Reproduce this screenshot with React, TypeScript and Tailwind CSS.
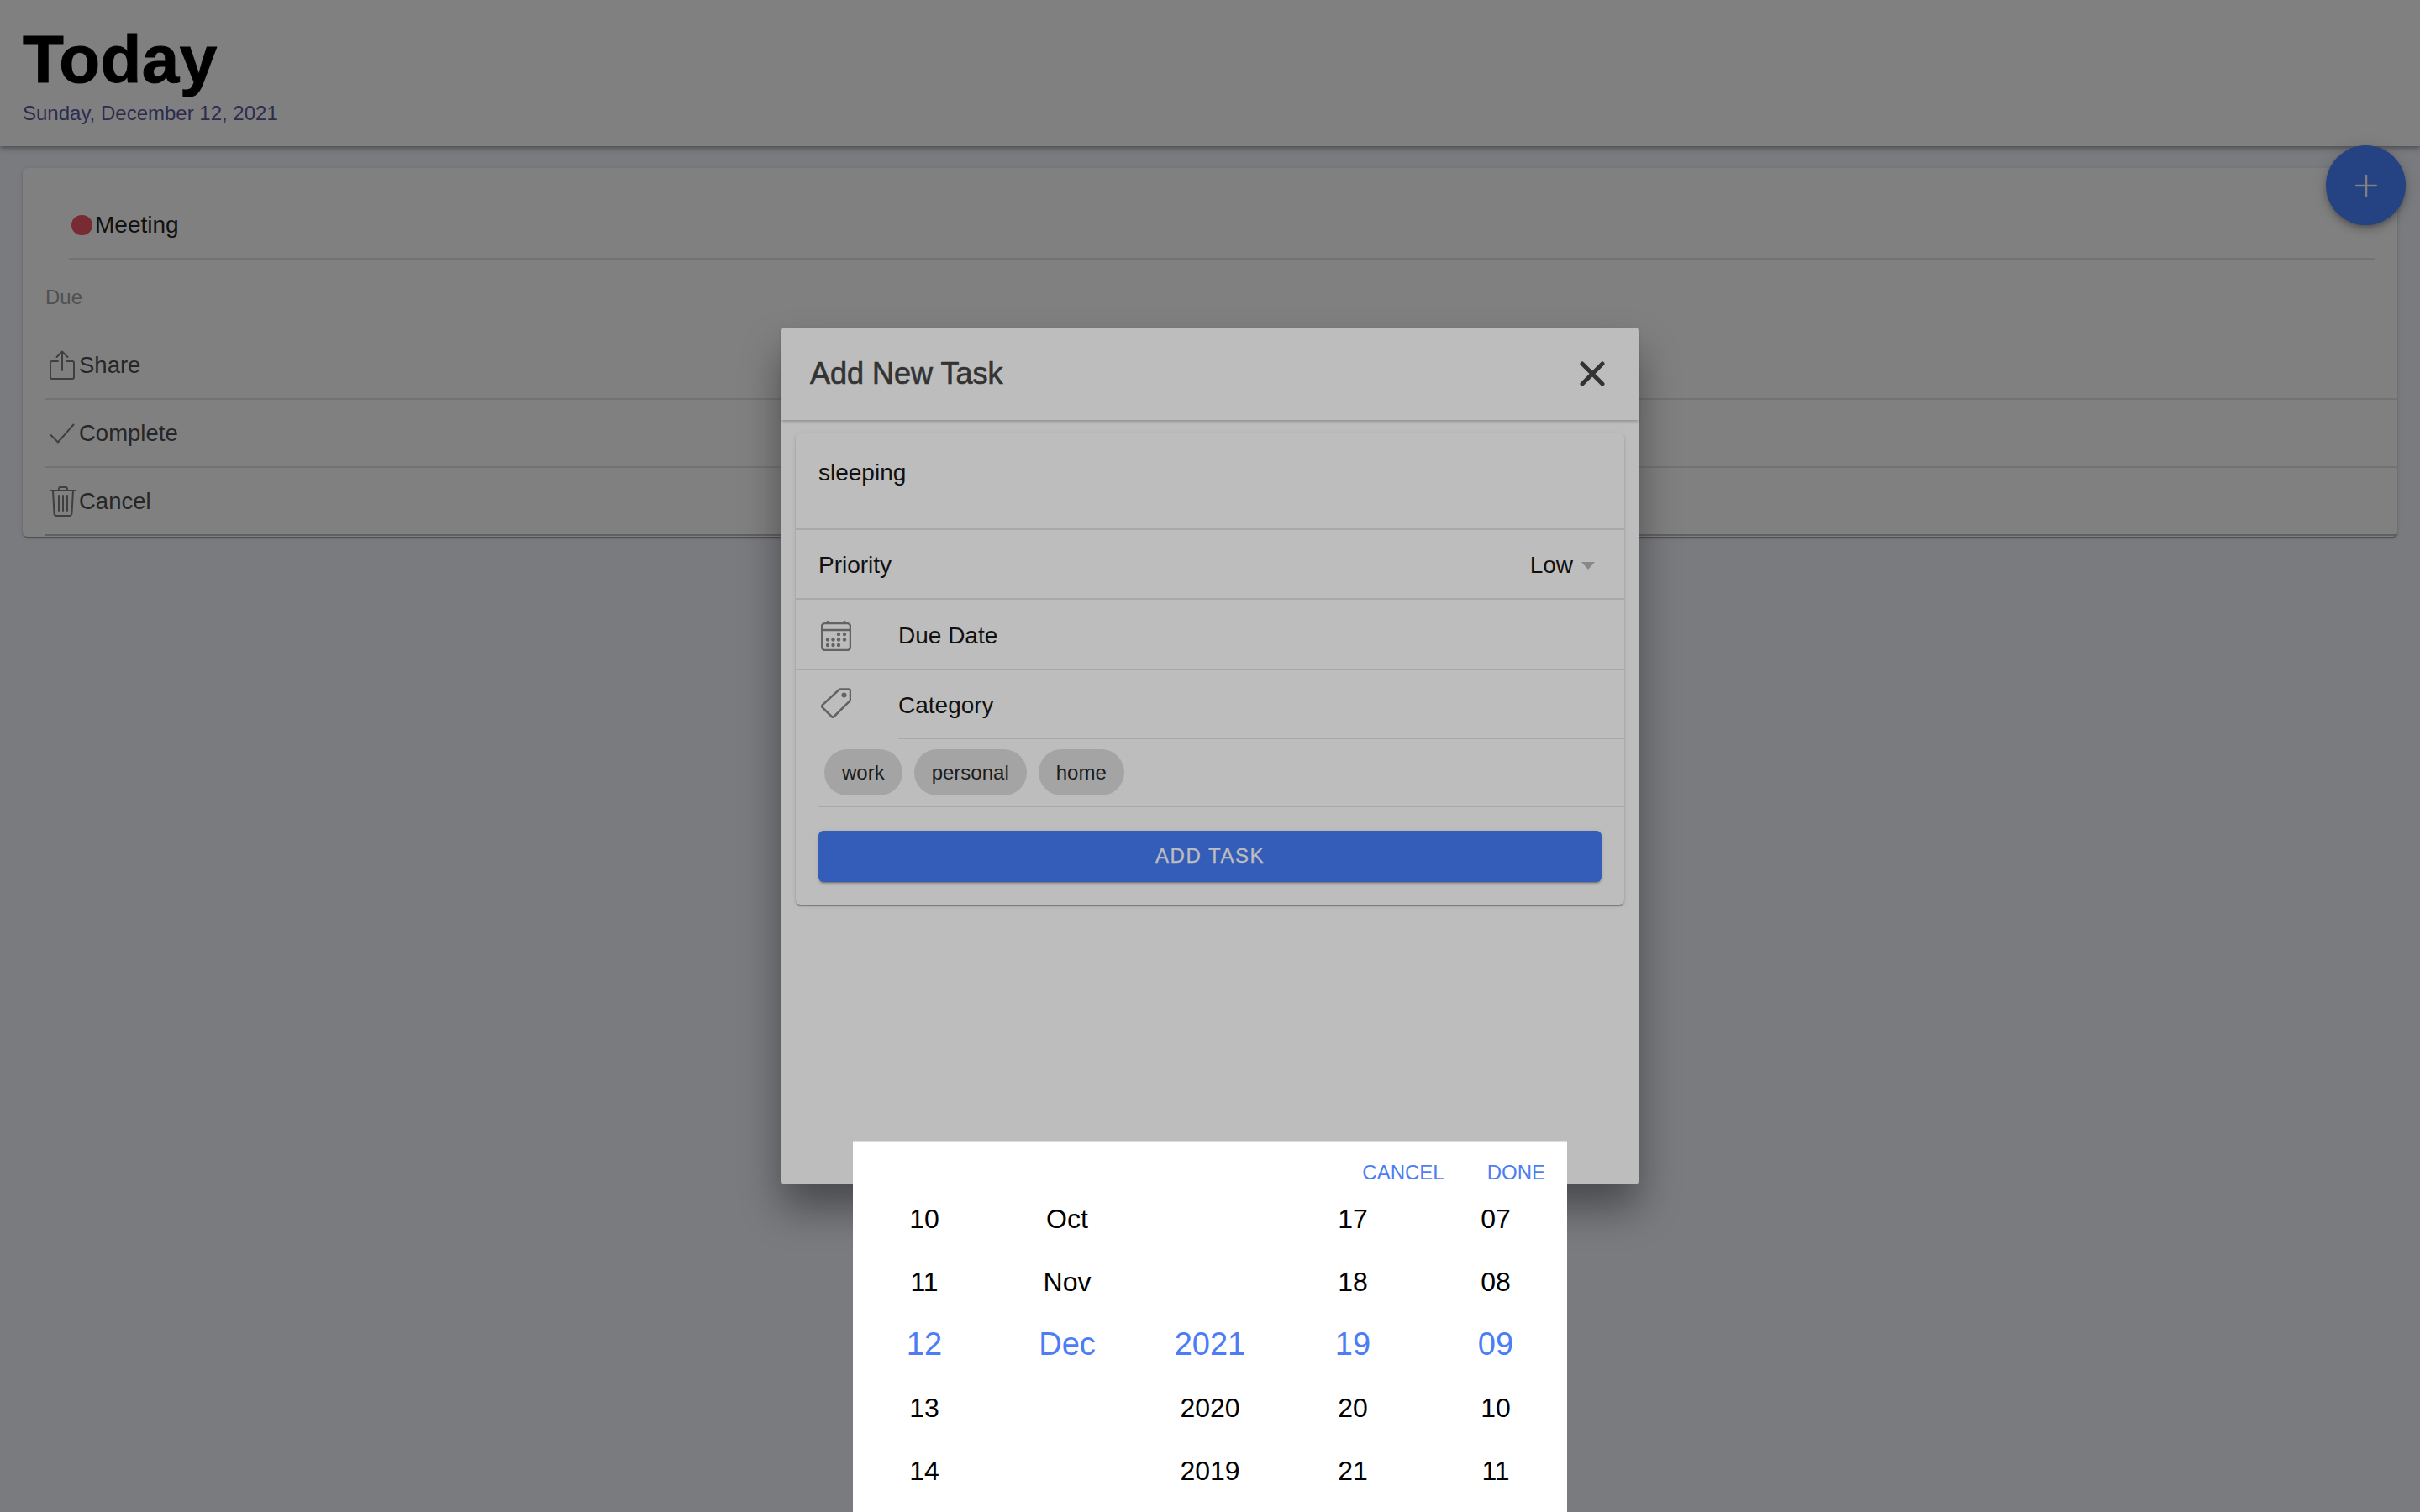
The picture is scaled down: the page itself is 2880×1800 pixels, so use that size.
const sans = "font-['Liberation_Sans',Arial,sans-serif]";

function ShareIcon() {
  return (
    <svg width="30" height="36" viewBox="0 0 30 36" fill="none" stroke="#3f3f42" strokeWidth="2" strokeLinecap="round" strokeLinejoin="round">
      <path d="M10 13H3a2 2 0 0 0-2 2v17a2 2 0 0 0 2 2h24a2 2 0 0 0 2-2V15a2 2 0 0 0-2-2h-7" />
      <path d="M15 24V2M8.500 8 15 1.500 21.500 8" />
    </svg>
  );
}

function CheckIcon() {
  return (
    <svg width="30" height="24" viewBox="0 0 30 24" fill="none" stroke="#3f3f42" strokeWidth="2" strokeLinecap="round" strokeLinejoin="round">
      <path d="M1.500 14 10 22.500 28.500 1.500" />
    </svg>
  );
}

function TrashIcon() {
  return (
    <svg width="32" height="36" viewBox="0 0 32 36" fill="none" stroke="#3f3f42" strokeWidth="2" strokeLinecap="round" strokeLinejoin="round">
      <path d="M1 5h30M11 5V3a2 2 0 0 1 2-2h6a2 2 0 0 1 2 2v2" />
      <path d="M4 5l1.500 27a3 3 0 0 0 3 3h15a3 3 0 0 0 3-3L28 5" />
      <path d="M11 11v18M16 11v18M21 11v18" />
    </svg>
  );
}

function CalendarIcon() {
  return (
    <svg width="36" height="36" viewBox="0 0 36 36" fill="none" stroke="#636363">
      <rect x="1" y="3" width="34" height="32" rx="4" strokeWidth="2.500" />
      <path d="M1 11h34" strokeWidth="2.500" />
      <path d="M8 0v4M28 0v4" strokeWidth="2.500" />
      <g fill="#636363" stroke="none">
        <circle cx="21" cy="16" r="2.200" /><circle cx="28" cy="16" r="2.200" />
        <circle cx="8" cy="22.500" r="2.200" /><circle cx="14.500" cy="22.500" r="2.200" /><circle cx="21" cy="22.500" r="2.200" /><circle cx="28" cy="22.500" r="2.200" />
        <circle cx="8" cy="29" r="2.200" /><circle cx="14.500" cy="29" r="2.200" /><circle cx="21" cy="29" r="2.200" />
      </g>
    </svg>
  );
}

function TagIcon() {
  return (
    <svg width="36" height="36" viewBox="0 0 36 36" fill="none" stroke="#636363" strokeWidth="2.500" strokeLinejoin="round">
      <path d="M23 1.500h10a2 2 0 0 1 2 2v10.500a2 2 0 0 1-.6 1.400L15.500 34a2 2 0 0 1-2.800 0L1.700 23.200a2 2 0 0 1 0-2.800L21.600 2a2 2 0 0 1 1.400-.5z" />
      <circle cx="27.500" cy="8.500" r="3" fill="#636363" stroke="none" />
    </svg>
  );
}

function CloseIcon() {
  return (
    <svg width="30" height="30" viewBox="0 0 30 30" fill="none" stroke="#333333" strokeWidth="5" strokeLinecap="round">
      <path d="M3 3l24 24M27 3L3 27" />
    </svg>
  );
}

function PlusIcon() {
  return (
    <svg width="26" height="26" viewBox="0 0 26 26" fill="none" stroke="#808080" strokeWidth="2.500" strokeLinecap="round">
      <path d="M13 1v24M1 13h24" />
    </svg>
  );
}

const actions = [
  { label: "Share", icon: <ShareIcon /> },
  { label: "Complete", icon: <CheckIcon /> },
  { label: "Cancel", icon: <TrashIcon /> },
];

const columns = [
  ["10", "11", "12", "13", "14"],
  ["Oct", "Nov", "Dec", "", ""],
  ["", "", "2021", "2020", "2019"],
  ["17", "18", "19", "20", "21"],
  ["07", "08", "09", "10", "11"],
];

const cardShadow = "shadow-[0_3px_1px_-2px_rgba(0,0,0,0.2),0_2px_2px_0_rgba(0,0,0,0.14),0_1px_5px_0_rgba(0,0,0,0.12)]";

export default function App() {
  return (
    <div className={`relative h-[1800px] w-[2880px] overflow-hidden bg-[#7a7b7f] ${sans}`}>
      <header className="h-[174px] bg-[#808080] pl-[27px] pt-[29px] shadow-[0_2px_4px_-1px_rgba(0,0,0,0.2),0_4px_5px_0_rgba(0,0,0,0.14),0_1px_10px_0_rgba(0,0,0,0.12)]">
        <h1 className="text-[80px] font-bold leading-[84px] tracking-[0.4px] text-black [-webkit-text-stroke:1px_#000000]">Today</h1>
        <p className="mt-[7px] text-[24px] leading-[30px] text-[#2e2c4e]">Sunday, December 12, 2021</p>
      </header>

      <main className={`mx-[27px] mt-[26px] h-[439px] rounded-[6px] bg-[#808080] ${cardShadow}`}>
        <div className="pl-[55px] pr-[27px]">
          <div className="flex h-[109px] items-center border-b-2 border-[#737373] pl-[3px] pt-[28px]">
            <span className="h-[24px] w-[25px] rounded-full bg-[#782b32]" />
            <span className="ml-[3px] text-[28px] text-[#111111]">Meeting</span>
          </div>
        </div>
        <p className="mt-[31px] pl-[27px] text-[24px] leading-[28px] text-[#505050]">Due</p>
        <div className="mt-[27px] pl-[27px]">
          {actions.map((a, i) => (
            <div key={a.label} className={`flex h-[81px] items-center border-b-2 ${i < 2 ? "border-[#737373]" : "border-[#606060]"}`}>
              <span className="flex w-[40px] pl-[5px]">{a.icon}</span>
              <span className="text-[27.500px] text-[#262626]">{a.label}</span>
            </div>
          ))}
        </div>
      </main>

      <div className="absolute inset-0 flex items-center justify-center">
        <div className="h-[1020px] w-[1020px] rounded-[4px] bg-[#bdbdbd] shadow-[0_28px_48px_rgba(0,0,0,0.4)]">
          <div className="flex h-[110px] items-center justify-between pl-[34px] pr-[40px] shadow-[0_2px_4px_-1px_rgba(0,0,0,0.2),0_2px_3px_0_rgba(0,0,0,0.1)]">
            <span className="text-[36px] text-[#333333] [-webkit-text-stroke:0.7px_#333333]">Add New Task</span>
            <CloseIcon />
          </div>
          <div className={`mx-[17px] mt-[16px] h-[561px] rounded-[6px] bg-[#bdbdbd] ${cardShadow}`}>
            <div className="h-[115px] border-b-2 border-[#a9a9a9] pl-[27px] pt-[30px] text-[28px] leading-[34px] text-[#111111]">sleeping</div>
            <div className="flex h-[83px] items-center justify-between border-b-2 border-[#a9a9a9] pl-[27px] pr-[35px] pt-[3px] text-[28px] text-[#111111]">
              <span>Priority</span>
              <span className="flex items-center gap-[10px]">
                <span>Low</span>
                <span className="h-0 w-0 border-x-[8px] border-t-[9px] border-x-transparent border-t-[#888888]" />
              </span>
            </div>
            <div className="flex h-[84px] items-center border-b-2 border-[#a9a9a9] pl-[30px] pt-[3px] text-[28px] text-[#111111]">
              <span className="flex w-[92px]"><CalendarIcon /></span>
              <span>Due Date</span>
            </div>
            <div className="flex h-[82px] items-stretch text-[28px] text-[#111111]">
              <span className="flex w-[122px] items-center pb-[4px] pl-[30px]"><TagIcon /></span>
              <span className="flex flex-1 items-center border-b-2 border-[#a9a9a9] pt-[3px]">Category</span>
            </div>
            <div className="ml-[27px] flex h-[81px] gap-[14px] border-b-2 border-[#a9a9a9] pl-[7px] pt-[12px]">
              {["work", "personal", "home"].map((c) => (
                <span key={c} className="flex h-[55px] items-center rounded-full bg-[#a4a4a4] px-[21px] text-[24px] text-[#1c1c1c]">{c}</span>
              ))}
            </div>
            <button className={`ml-[27px] mt-[28px] flex h-[61px] w-[932px] items-center justify-center rounded-[6px] bg-[#345db9] pb-[2px] text-[24px] tracking-[1.500px] text-[#bdbdbd] [-webkit-text-stroke:0.3px_#bdbdbd] ${cardShadow}`}>
              ADD TASK
            </button>
          </div>
        </div>
      </div>

      <button className="absolute left-[2768px] top-[173px] flex h-[95px] w-[95px] items-center justify-center rounded-full bg-[#254282] shadow-[0_3px_5px_-1px_rgba(0,0,0,0.2),0_6px_10px_0_rgba(0,0,0,0.14),0_1px_18px_0_rgba(0,0,0,0.12)]">
        <PlusIcon />
      </button>

      <div className="absolute bottom-0 left-1/2 h-[442px] w-[850px] -translate-x-1/2 border-t border-[#dcdcdc] bg-white">
        <div className="flex h-[51px] items-end justify-end gap-[51px] pr-[26px] text-[24px] leading-[28px] text-[#4c7df5]">
          <span>CANCEL</span>
          <span>DONE</span>
        </div>
        <div className="grid grid-cols-5 pt-[3px]">
          {columns.map((col, i) => (
            <div key={i} className="flex flex-col">
              {col.map((v, j) => (
                <div key={j} className={`flex h-[75px] items-center justify-center ${j === 2 ? "text-[38px] text-[#4c7df5]" : "text-[32px] text-black"}`}>
                  {v}
                </div>
              ))}
            </div>
          ))}
        </div>
      </div>
    </div>
  );
}
